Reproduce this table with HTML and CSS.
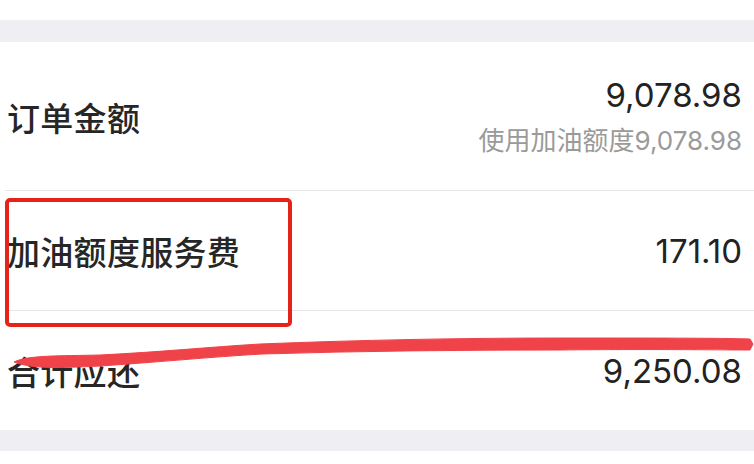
FILE: index.html
```html
<!DOCTYPE html>
<html lang="zh-CN">
<head>
<meta charset="utf-8">
<title>账单明细</title>
<link rel="stylesheet" href="styles.css">
</head>
<body>
<div class="page">
  <div class="band"></div>
  <section class="card">
    <div class="row row-tall">
      <span class="label">订单金额</span>
      <div class="amount">
        <div class="value">9,078.98</div>
        <div class="sub">使用加油额度<span class="num">9,078.98</span></div>
      </div>
    </div>
    <div class="row">
      <span class="label">加油额度服务费</span>
      <div class="amount">
        <div class="value">171.10</div>
      </div>
    </div>
    <div class="row">
      <span class="label">合计应还</span>
      <div class="amount">
        <div class="value">9,250.08</div>
      </div>
    </div>
  </section>
  <div class="band band-bottom"></div>
  <svg class="annot" width="754" height="464" viewBox="0 0 754 464" aria-hidden="true">
    <rect class="annot-box" x="7" y="200" width="283" height="125" rx="3" ry="3"/>
    <path class="annot-stroke" d="M14,362 C28,355 60,356 100,355 C160,352 210,347 260,344 C360,340 460,338 560,338 C650,338 720,338 750,339 L753,344 L750,350 C720,350 650,349 560,350 C460,350 360,351 262,354 C210,357 160,362 100,366 C60,368 32,369 14,362 Z"/>
  </svg>
</div>
</body>
</html>
```
FILE: styles.css
```css
html, body {
  margin: 0;
  padding: 0;
  background: #ffffff;
}

.page {
  position: relative;
  width: 754px;
  height: 464px;
  overflow: hidden;
  padding-top: 20px;
  box-sizing: border-box;
  font-family: "Noto Sans CJK SC", "Noto Sans", sans-serif;
}

.band {
  height: 22px;
  background: #efeff3;
}

.band-bottom {
  height: 21px;
}

.card {
  background: #ffffff;
  display: flex;
  flex-direction: column;
}

.row {
  display: flex;
  align-items: center;
  justify-content: space-between;
  height: 120px;
  padding: 0 12px 0 2px;
  margin-left: 5px;
  border-bottom: 1px solid #e6e6e8;
  box-sizing: border-box;
}

.row:last-child {
  border-bottom: none;
  height: 119px;
}

.row-tall {
  height: 149px;
  padding-top: 2px;
}

.label {
  font-size: 33px;
  font-weight: 500;
  color: #262626;
  line-height: 44px;
  letter-spacing: 0.3px;
}

.amount {
  display: flex;
  flex-direction: column;
  align-items: flex-end;
}

.value {
  font-family: Inter, "Noto Sans CJK SC", sans-serif;
  font-variant-numeric: proportional-nums;
  font-size: 33px;
  line-height: 44px;
  color: #222222;
}

.sub {
  margin-top: 2px;
  font-size: 26px;
  line-height: 40px;
  color: #9a9a9a;
}

.num {
  font-family: Inter, sans-serif;
  font-variant-numeric: proportional-nums;
}

.annot {
  position: absolute;
  left: 0;
  top: 0;
  pointer-events: none;
}

.annot-box {
  fill: none;
  stroke: #e5231b;
  stroke-width: 4;
}

.annot-stroke {
  fill: #ef4249;
  stroke: #ef4249;
  stroke-width: 1;
  stroke-linejoin: round;
}
```
